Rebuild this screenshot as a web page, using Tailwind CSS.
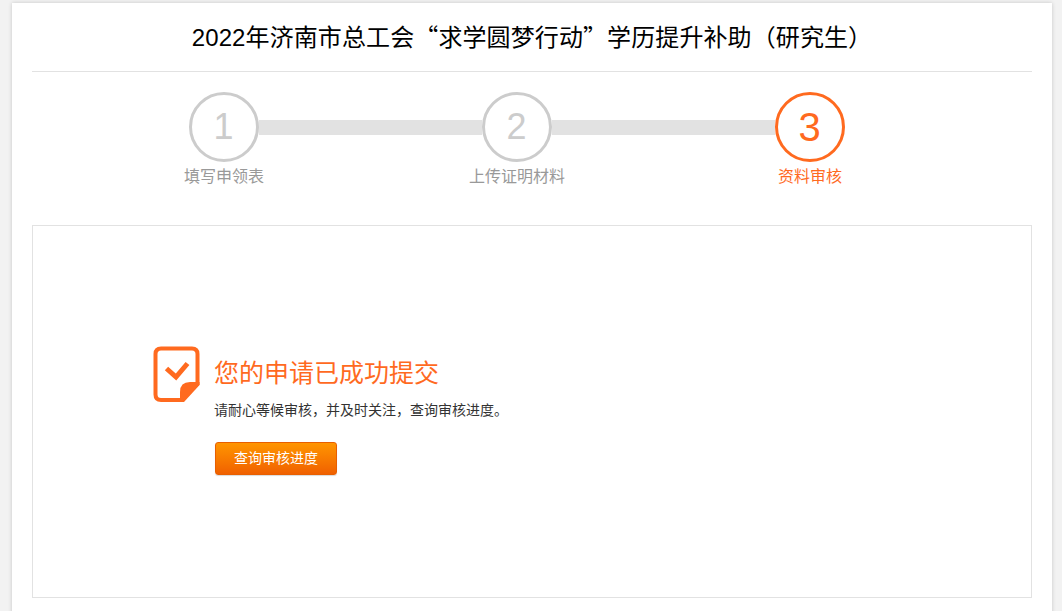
<!DOCTYPE html>
<html lang="zh-CN">
<head>
    <meta charset="UTF-8">
    <meta name="viewport" content="width=device-width, initial-scale=1.0">
    <title>资料审核</title>
    <script src="https://cdn.jsdelivr.net/npm/@tailwindcss/browser@4"></script>
</head>
<body class="h-[611px] overflow-hidden bg-[#f2f2f2] font-['Liberation_Sans','Noto_Sans_CJK_SC',sans-serif]">

    <!-- Card -->
    <div class="ml-[12px] mt-[3px] h-[700px] w-[1040px] bg-white px-[20px] shadow-[0_0_4px_rgba(0,0,0,0.18)]">

        <!-- Title -->
        <h1 class="h-[69px] border-b border-[#e2e2e2] pt-[16px] text-center text-[24px] leading-[34px] tracking-[0.1px] text-black">2022年济南市总工会<span class="font-['Noto_Sans_CJK_SC',sans-serif]">“</span>求学圆梦行动<span class="font-['Noto_Sans_CJK_SC',sans-serif]">”</span>学历提升补助&#xFF08;研究生&#xFF09;</h1>

        <!-- Steps -->
        <div class="flex h-[153px] items-start pl-[157px] pt-[20px]">
            <div class="flex w-[70px] flex-col items-center">
                <div class="flex h-[70px] w-[70px] shrink-0 items-center justify-center rounded-full border-[3px] border-[#cccccc] pb-[1px] pr-[1px] text-[36px] text-[#cccccc]">1</div>
                <div class="mt-[3px] whitespace-nowrap text-[16px] leading-[24px] text-[#999999]">填写申领表</div>
            </div>
            <div class="mt-[28px] h-[15px] w-[223px] bg-[#e2e2e2]"></div>
            <div class="flex w-[70px] flex-col items-center">
                <div class="flex h-[70px] w-[70px] shrink-0 items-center justify-center rounded-full border-[3px] border-[#cccccc] pb-[1px] pr-[1px] text-[36px] text-[#cccccc]">2</div>
                <div class="mt-[3px] whitespace-nowrap text-[16px] leading-[24px] text-[#999999]">上传证明材料</div>
            </div>
            <div class="mt-[28px] h-[15px] w-[223px] bg-[#e2e2e2]"></div>
            <div class="flex w-[70px] flex-col items-center">
                <div class="flex h-[70px] w-[70px] shrink-0 items-center justify-center rounded-full border-[3px] border-[#ff6a1f] pb-[1px] pr-[1px] text-[40px] text-[#ff6a1f]">3</div>
                <div class="mt-[3px] whitespace-nowrap text-[16px] leading-[24px] text-[#ff6a1f]">资料审核</div>
            </div>
        </div>

        <!-- Result box -->
        <div class="flex h-[373px] items-start gap-[14px] border border-[#e2e2e2] pl-[120px] pt-[120px]">
            <svg class="shrink-0" width="47" height="57" viewBox="0 0 47 57">
                <path d="M8 2.500H39Q44.500 2.500 44.500 8V38L29 54H8Q2.500 54 2.500 48.500V8Q2.500 2.500 8 2.500Z" fill="#fff" stroke="#ff6a1f" stroke-width="4"/>
                <path d="M46.500 36V39L31 56H27V46Q27 36 37 36Z" fill="#ff6a1f"/>
                <path d="M13.500 22.500L23 31L34.500 17.500" fill="none" stroke="#ff6a1f" stroke-width="5"/>
            </svg>
            <div class="flex flex-col items-start">
                <div class="mt-[9px] text-[25px] leading-[36px] text-[#ff6a1f]">您的申请已成功提交</div>
                <p class="mt-[8px] font-['Noto_Sans_CJK_SC',sans-serif] text-[14px] leading-[20px] text-[#333333]">请耐心等候审核&#xFF0C;并及时关注&#xFF0C;查询审核进度。</p>
                <button class="ml-[1px] mt-[23px] h-[33px] w-[122px] rounded-[3px] border border-[#e85f00] bg-gradient-to-b from-[#ff9500] to-[#f06000] text-[14px] text-white shadow-[0_1px_1px_rgba(0,0,0,0.15)]">查询审核进度</button>
            </div>
        </div>
    </div>

</body>
</html>
